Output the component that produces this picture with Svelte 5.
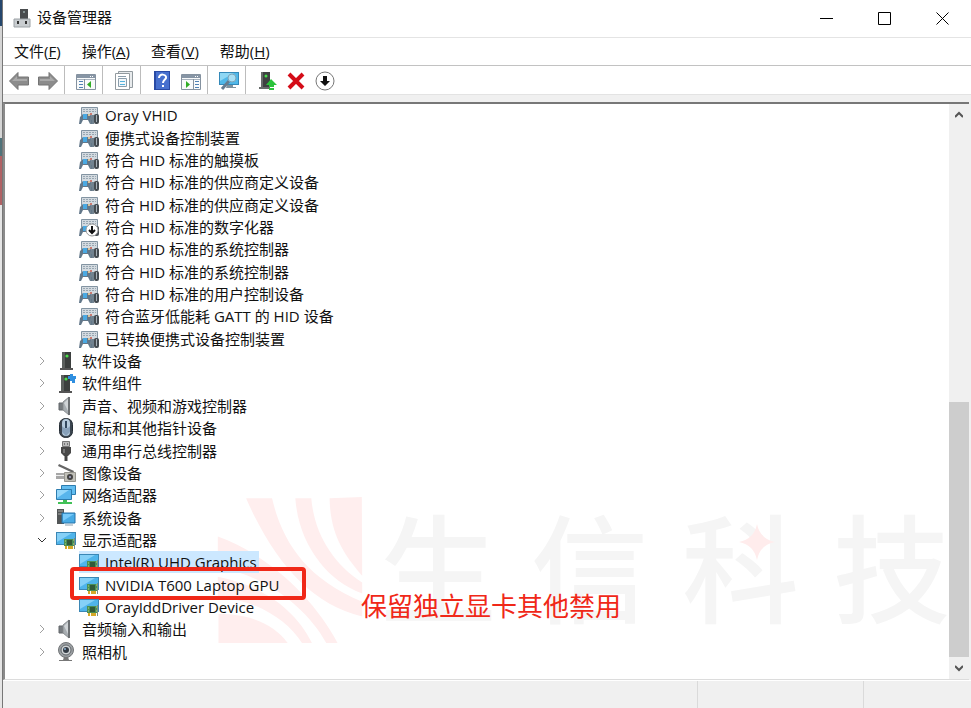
<script>
  const menus = [
    { label: '文件', key: 'F' },
    { label: '操作', key: 'A' },
    { label: '查看', key: 'V' },
    { label: '帮助', key: 'H' }
  ]

  const toolGroups = [
    [{ icon: 'back', label: '后退' }, { icon: 'forward', label: '前进' }],
    [{ icon: 'console', label: '显示/隐藏控制台树' }],
    [{ icon: 'properties', label: '属性' }],
    [{ icon: 'help', label: '帮助' }, { icon: 'action', label: '显示/隐藏操作窗格' }],
    [{ icon: 'scan', label: '扫描检测硬件改动' }],
    [
      { icon: 'update', label: '更新驱动程序' },
      { icon: 'remove', label: '卸载设备' },
      { icon: 'disable', label: '禁用设备' }
    ]
  ]

  const nodes = [
    { level: 2, icon: 'hid', name: 'Oray VHID' },
    { level: 2, icon: 'hid', name: '便携式设备控制装置' },
    { level: 2, icon: 'hid', name: '符合 HID 标准的触摸板' },
    { level: 2, icon: 'hid', name: '符合 HID 标准的供应商定义设备' },
    { level: 2, icon: 'hid', name: '符合 HID 标准的供应商定义设备' },
    { level: 2, icon: 'hid', name: '符合 HID 标准的数字化器', disabled: true },
    { level: 2, icon: 'hid', name: '符合 HID 标准的系统控制器' },
    { level: 2, icon: 'hid', name: '符合 HID 标准的系统控制器' },
    { level: 2, icon: 'hid', name: '符合 HID 标准的用户控制设备' },
    { level: 2, icon: 'hid', name: '符合蓝牙低能耗 GATT 的 HID 设备' },
    { level: 2, icon: 'hid', name: '已转换便携式设备控制装置' },
    { level: 1, icon: 'software', name: '软件设备' },
    { level: 1, icon: 'component', name: '软件组件' },
    { level: 1, icon: 'sound', name: '声音、视频和游戏控制器' },
    { level: 1, icon: 'mouse', name: '鼠标和其他指针设备' },
    { level: 1, icon: 'usb', name: '通用串行总线控制器' },
    { level: 1, icon: 'imaging', name: '图像设备' },
    { level: 1, icon: 'network', name: '网络适配器' },
    { level: 1, icon: 'system', name: '系统设备' },
    { level: 1, icon: 'display', name: '显示适配器', open: true },
    { level: 2, icon: 'display', name: 'Intel(R) UHD Graphics', selected: true },
    { level: 2, icon: 'display', name: 'NVIDIA T600 Laptop GPU', marked: true },
    { level: 2, icon: 'display', name: 'OrayIddDriver Device' },
    { level: 1, icon: 'sound', name: '音频输入和输出' },
    { level: 1, icon: 'camera', name: '照相机' }
  ]

  const scroll = { before: 52, size: 48 }
</script>

{#snippet tower()}
  <path d="M6 1h9v16H6z" fill="#3c3f3e" />
  <path d="M6 1h3v16H6z" fill="#5b5f5d" />
  <path d="M4 17h13v2H4z" fill="#555" />
  <circle cx="11" cy="5" r="1.6" fill="#4be04b" />
{/snippet}

{#snippet monitor()}
  <path d="M0 2h20v13H0z" fill="#3b87b5" />
  <path d="M1 3h18v11H1z" fill="#4fb4ea" />
  <path d="M1 3h15L1 12z" fill="#85d0f7" />
{/snippet}

{#snippet glyph(name)}
  <svg class="glyph" viewBox="0 0 20 20" aria-hidden="true">
    {#if name === 'hid'}
      <path d="M2.500 2.500h16v8h-16z" fill="#d3dae0" stroke="#8394a2" />
      <path d="M4 4.500h13M4 6.500h13" stroke="#98a6b1" stroke-dasharray="2 1" />
      <path d="M0 19l1-7 3-3h6l3 3v7h-2l-2-4H4l-2 4z" fill="#627789" />
      <path d="M4 9h4v5H4z" fill="#4aa9e2" />
      <path d="M9 9h2v2H9z" fill="#d9c29a" />
      <circle cx="12" cy="9" r="1" fill="#c65a4c" />
      <path d="M11 19v-6l2-3h2v9h-2v-4h-1v4z" fill="#71828f" />
      <rect x="15" y="9" width="5" height="10" rx="2" fill="#454c52" />
      <path d="M17.500 10v7" stroke="#a8b2ba" />
    {:else if name === 'software'}
      {@render tower()}
    {:else if name === 'component'}
      <g transform="translate(-1 1)">{@render tower()}</g>
      <path d="M12 3h2V1h3v2h3v3h-1v4h-3V8h-2V6h-2z" fill="#2f8fe0" />
    {:else if name === 'sound'}
      <path d="M3 7h4v7H3z" fill="#777c80" stroke="#63676a" />
      <path d="M7 6l6-5v18l-6-5z" fill="#a7adb1" stroke="#8b8f92" />
      <path d="M12 1h2v18h-2z" fill="#6d7174" />
      <path d="M8 7l4-4v12z" fill="#d0d4d7" />
    {:else if name === 'mouse'}
      <rect x="3.500" y=".5" width="13" height="19" rx="6" fill="#3b4550" stroke="#252d35" />
      <rect x="6" y="1" width="8" height="17" rx="4" fill="#b6cbdd" />
      <path d="M6 8c2 3 6 3 8 0v6l-4 4-4-4z" fill="#88a1ba" />
      <path d="M10 3v7" stroke="#32485e" stroke-width="2" />
    {:else if name === 'usb'}
      <path d="M6.500.5h7v5h-7z" fill="#bbb" stroke="#777" />
      <path d="M8 3h1M11 3h1" stroke="#333" />
      <path d="M5 6h10v6l-3 3H8l-3-3z" fill="#484848" />
      <path d="M7 8h2v4H7z" fill="#777" />
      <path d="M10 14v6" stroke="#444" stroke-width="3" />
    {:else if name === 'imaging'}
      <path d="M3 1l15 7-1 2L2 3z" fill="#666" />
      <path d="M0 10h9v6H0z" fill="#a7a7a7" />
      <path d="M0 12.500h8" stroke="#eee" />
      <path d="M8.500 9.500h11v9h-11z" fill="#c1c0b9" stroke="#96958e" />
      <circle cx="14" cy="14" r="3" fill="#444" />
      <circle cx="14" cy="14" r="1" fill="#aac" />
    {:else if name === 'network'}
      <path d="M5.500.5h14v9h-14z" fill="#62bdf0" stroke="#2d7cae" />
      <path d="M.5 4.500h15v10H.5z" fill="#58b5ec" stroke="#2d7cae" />
      <path d="M1 5h12L1 13z" fill="#95d7fa" />
      <path d="M7 15h4v2h5v2H2v-2h5z" fill="#41c157" />
    {:else if name === 'system'}
      <path d="M1 1h7v15H1z" fill="#525657" />
      <path d="M2 3h5M2 6h5" stroke="#aaa" />
      <path d="M6 5h13v10H6z" fill="#48abe5" stroke="#2673a8" />
      <path d="M7 6h11L7 13z" fill="#78cafa" />
      <path d="M9 17h8" stroke="#8ba0ae" />
    {:else if name === 'display'}
      {@render monitor()}
      <path d="M8 9h11v7H8z" fill="#4a8f57" />
      <path d="M11 10h5v5h-5z" fill="#315a3a" />
      <path d="M9 11h1M17 10h1M9 14h1M17 14h1" stroke="#b5db74" />
      <path d="M9 16h2v3H9zM12 16h5v3h-5z" fill="#d5a928" />
      <path d="M18.500 8v11" stroke="#7d8f80" />
    {:else if name === 'camera'}
      <circle cx="10" cy="8" r="7.500" fill="#9b9fa2" stroke="#727578" />
      <circle cx="10" cy="8" r="5" fill="#d0d4d6" stroke="#62676b" />
      <circle cx="10" cy="8" r="3" fill="#343c45" />
      <circle cx="9" cy="7" r="1" fill="#8aafd0" />
      <path d="M8 15h4l1 3h3v1H3v-1h4z" fill="#777" />
    {:else if name === 'back' || name === 'forward'}
      <g transform={name === 'forward' ? 'translate(20 0) scale(-1 1)' : null}>
        <path d="M.5 10L9 1.500V6h10.500v8H9v4.500z" fill="#8c8c8c" stroke="#747474" />
        <path d="M3 10l5-5v3h10v2z" fill="#aaa" />
      </g>
    {:else if name === 'console' || name === 'action'}
      <path d="M.5 3.500h19v15H.5z" fill="#f8fafb" stroke="#8592a0" />
      <path d="M1 4h18v3H1z" fill="#8795a5" />
      <path d="M14 5.500h4" stroke="#fff" stroke-dasharray="1 1" />
      <path d="M1 8.500h18" stroke="#a9b3be" />
      {#if name === 'console'}
        <path d="M3 10.500h4M3 13.500h4M3 16.500h4" stroke="#4f81b4" />
        <path d="M8.500 8v10" stroke="#8592a0" />
        <path d="M15 10v7l-4-3.500z" fill="#30ac25" />
      {:else}
        <path d="M14 10.500h4M14 13.500h4M14 16.500h4" stroke="#4f81b4" />
        <path d="M12.500 8v10" stroke="#8592a0" />
        <path d="M5 10v7l4-3.500z" fill="#30ac25" />
      {/if}
    {:else if name === 'properties'}
      <path d="M4.500.5h14v16h-14z" fill="#e8ebed" stroke="#929a9f" />
      <path d="M1.500 2.500h14v16h-14z" fill="#fff" stroke="#929a9f" />
      <path d="M4 5.500h8" stroke="#8a9dab" />
      <path d="M4.500 7.500h8v8h-8z" fill="#f2f7fa" stroke="#8a9dab" />
      <path d="M6 10.500h5M6 13.500h5" stroke="#55b3dd" />
    {:else if name === 'help'}
      <path d="M2 0h16v19H2z" fill="#294aa5" />
      <path d="M4 1h13v17H4z" fill="#4770ce" />
      <path d="M7 7c0-5 8-4 7 0-1 2-3 2-3 5M11 14v2" fill="none" stroke="#fff" stroke-width="2" />
    {:else if name === 'scan'}
      <path d="M0 1h20v13H0z" fill="#3489b9" />
      <path d="M1 2h18v11H1z" fill="#50b8e9" />
      <path d="M1 2h14L1 10z" fill="#8ed7f4" />
      <path d="M8 14h6v2h3v1H7z" fill="#7d919e" />
      <path d="M10 10l-7 8" stroke="#657c90" stroke-width="3" />
      <circle cx="13" cy="7" r="4" fill="#a8dff4" stroke="#7ea5b9" />
    {:else if name === 'update'}
      <path d="M4 1h9v15H4z" fill="#3e4141" />
      <path d="M4 1h2v15H4zM2 16h11v2H2z" fill="#676b6a" />
      <circle cx="9" cy="5" r="1.500" fill="#46df49" />
      <path d="M14 8l6 6h-3v2h-5v-2H9zM12 17h5v2h-5z" fill="#2bc33b" />
    {:else if name === 'remove'}
      <path d="M3 3l14 14M17 3L3 17" stroke="#d40c18" stroke-width="4" />
    {:else if name === 'disable'}
      <circle cx="10" cy="10" r="9" fill="#fff" stroke="#777" />
      <path d="M8 5h4v5h3l-5 5-5-5h3z" fill="#111" />
    {/if}
  </svg>
{/snippet}

<div class="window">
  <header class="titlebar">
    <svg class="app-icon" viewBox="0 0 18 20" aria-hidden="true">
      <path d="M7 0h8v11H7z" fill="#494c4e" />
      <circle cx="11" cy="3" r="1" fill="#9aa" />
      <path d="M1 10h16v8H1z" fill="#c9cdd0" stroke="#9ca2a6" />
      <path d="M4 12h2v3H4zM12 12h2v3h-2z" fill="#333" />
    </svg>
    <h1>设备管理器</h1>
    <div class="window-controls">
      <button aria-label="最小化"><svg viewBox="0 0 13 13"><path d="M0 6.500h13" /></svg></button>
      <button aria-label="最大化"><svg viewBox="0 0 13 13"><path d="M.5.5h12v12H.5z" /></svg></button>
      <button aria-label="关闭"><svg viewBox="0 0 13 13"><path d="M.5.5l12 12M12.500.5l-12 12" /></svg></button>
    </div>
  </header>

  <nav class="menubar">
    {#each menus as menu}
      <button>{menu.label}(<u>{menu.key}</u>)</button>
    {/each}
  </nav>

  <div class="toolbar" role="toolbar" aria-label="工具栏">
    {#each toolGroups as group}
      <div class="group">
        {#each group as tool}
          <button aria-label={tool.label}>{@render glyph(tool.icon)}</button>
        {/each}
      </div>
    {/each}
  </div>

  <main class="pane">
    <div class="watermark" aria-hidden="true">
      <svg class="logo" viewBox="20 18 438 442">
        <path d="M358 22l97-4 1 237C400 190 360 130 358 22z" />
        <path d="M255 22h48c9 108 67 198 153 253v33C350 270 265 160 255 22z" />
        <path d="M107 22h78c30 128 100 240 271 311v44C300 340 190 210 107 22z" />
        <path d="M22 137c148 53 288 183 360 320h-34C290 350 160 250 22 230z" />
        <path d="M22 258c120 22 230 90 283 199h-30C230 385 130 325 22 320z" />
        <path d="M24 370c96 0 166 30 208 87H24z" />
      </svg>
      <div class="brand">
        <span>生</span>
        <span>信</span>
        <span>科</span>
        <span>技</span>
        <svg class="spark" viewBox="0 0 36 36"><path d="M18 0q3 15 18 18-15 3-18 18-3-15-18-18 15-3 18-18z" /></svg>
      </div>
    </div>

    <ul class="tree" role="tree">
      {#each nodes as node}
        <li
          role="treeitem"
          aria-selected={!!node.selected}
          class:child={node.level === 2}
          class:selected={node.selected}
          class:marked={node.marked}
        >
          {#if node.level === 1}
            <button class="toggle" class:open={node.open} aria-label={node.open ? '折叠' : '展开'}>
              <svg viewBox="0 0 8 8"><path d="M2 0l4 4-4 4" /></svg>
            </button>
          {/if}
          <span class="item">
            <span class="icon">
              {@render glyph(node.icon)}
              {#if node.disabled}
                <svg class="badge" viewBox="0 0 14 14">
                  <circle cx="7" cy="7" r="6" />
                  <path d="M7 3v7M4 7l3 3 3-3" />
                </svg>
              {/if}
            </span>
            <span class="name">{node.name}</span>
          </span>
        </li>
      {/each}
    </ul>

    <p class="note">保留独立显卡其他禁用</p>

    <div class="scrollbar">
      <button aria-label="向上滚动"><svg viewBox="0 0 8 8"><path d="M0 6l4-4 4 4" /></svg></button>
      <div class="track">
        <div style="height: {scroll.before}%"></div>
        <div class="thumb" style="height: {scroll.size}%"></div>
      </div>
      <button aria-label="向下滚动"><svg viewBox="0 0 8 8"><path d="M0 2l4 4 4-4" /></svg></button>
    </div>
  </main>

  <footer class="statusbar">
    <div></div>
    <div></div>
    <div></div>
  </footer>
</div>

<style>
  :global(body) {
    background: linear-gradient(#25476d 26px, #d5d5d5 26px 138px, #50737a 138px 156px, #b06265 156px 205px, #e5e5e5 205px);
  }
  .window {
    box-sizing: border-box;
    min-height: 100vh;
    margin-left: 2px;
    border-left: 1px solid #777;
    display: flex;
    flex-direction: column;
    background: #f0f0f0;
    color: #111;
    font: 15px/22px 'Open Sans', 'Noto Sans CJK SC', sans-serif;
  }
  button {
    padding: 0;
    border: 0;
    background: none;
    color: inherit;
    font: inherit;
  }
  svg {
    display: block;
  }
  .titlebar {
    display: flex;
    align-items: center;
    height: 37px;
    padding-left: 10px;
    background: #fff;
    border-bottom: 1px solid #e4e4e4;
  }
  .app-icon {
    width: 18px;
    height: 20px;
    margin-right: 6px;
  }
  h1 {
    flex: 1;
    margin: 0;
    padding-bottom: 4px;
    font-size: 15px;
    font-weight: 400;
  }
  .window-controls {
    display: flex;
  }
  .window-controls button {
    display: grid;
    place-items: center;
    width: 58px;
    height: 36px;
  }
  .window-controls svg {
    width: 13px;
    height: 13px;
    fill: none;
    stroke: #000;
  }
  .menubar {
    display: flex;
    gap: 21px;
    height: 25px;
    padding: 0 0 2px 11px;
    background: #fff;
    border-bottom: 1px solid #c2c2c2;
  }
  .toolbar {
    display: flex;
    height: 28px;
    padding-left: 1px;
    background: #fff;
    border-bottom: 1px solid #e3e3e3;
  }
  .group {
    display: flex;
  }
  .group + .group {
    margin-left: 2px;
    padding-left: 6px;
    border-left: 1px solid #bcbcbc;
  }
  .toolbar button {
    display: grid;
    place-items: center;
    width: 29px;
    padding-top: 2px;
  }
  .glyph {
    width: 20px;
    height: 20px;
  }
  .pane {
    position: relative;
    flex: 1;
    display: flex;
    margin: 7px 2px 0 0;
    border-top: 2px solid #777;
    border-left: 2px solid #8b8b8b;
    border-bottom: 1px solid #dcdcdc;
    background: #fff;
  }
  .tree {
    position: relative;
    flex: 1;
    display: grid;
    grid-auto-rows: 1fr;
    margin: 0;
    padding: 0 0 16px 27px;
    list-style: none;
  }
  li {
    position: relative;
    display: flex;
    align-items: center;
    min-height: 22px;
  }
  li.child {
    padding-left: 47px;
  }
  .toggle {
    display: grid;
    place-items: center;
    width: 20px;
    height: 20px;
    margin-right: 4px;
  }
  .toggle svg,
  .scrollbar svg {
    width: 8px;
    height: 8px;
    fill: none;
    stroke: #a0a0a0;
  }
  .toggle.open svg {
    transform: rotate(90deg);
    stroke: #333;
  }
  .item {
    display: flex;
    align-items: center;
    gap: 6px;
    height: 22px;
  }
  .child .item {
    padding-right: 2px;
  }
  .selected .item {
    background: #cce8ff;
  }
  .icon {
    position: relative;
  }
  .badge {
    position: absolute;
    right: 0;
    bottom: 0;
    width: 14px;
    height: 14px;
    fill: #fff;
    stroke: #999;
  }
  .badge path {
    fill: none;
    stroke: #111;
    stroke-width: 2;
  }
  .marked::after {
    content: '';
    position: absolute;
    left: 38px;
    top: -7px;
    width: 228px;
    height: 25px;
    border: 4px solid #f02818;
    border-radius: 4px;
  }
  .note {
    position: absolute;
    left: 356px;
    bottom: 55px;
    margin: 0;
    color: #f02818;
    font-size: 26px;
    line-height: 36px;
  }
  .watermark {
    position: absolute;
    left: 212px;
    bottom: 35px;
    display: flex;
    gap: 17px;
    color: #f5f5f5;
  }
  .logo {
    width: 146px;
    height: 147px;
    fill: #ffeeee;
  }
  .brand {
    position: relative;
    display: flex;
    gap: 34px;
    font-size: 117px;
    font-weight: 500;
    line-height: 143px;
  }
  .spark {
    position: absolute;
    left: 359px;
    top: 27px;
    width: 36px;
    height: 36px;
    fill: #ffecec;
  }
  .scrollbar {
    position: relative;
    display: flex;
    flex-direction: column;
    width: 20px;
    background: #f0f0f0;
  }
  .scrollbar button {
    display: grid;
    place-items: center;
    height: 22px;
  }
  .scrollbar svg {
    stroke: #555;
    stroke-width: 2;
  }
  .track {
    flex: 1;
  }
  .thumb {
    background: #cdcdcd;
  }
  .statusbar {
    display: grid;
    grid-template-columns: 1fr 166px 108px;
    height: 27px;
    border-top: 1px solid #fff;
  }
  .statusbar div + div {
    border-left: 1px solid #dadada;
  }
</style>
